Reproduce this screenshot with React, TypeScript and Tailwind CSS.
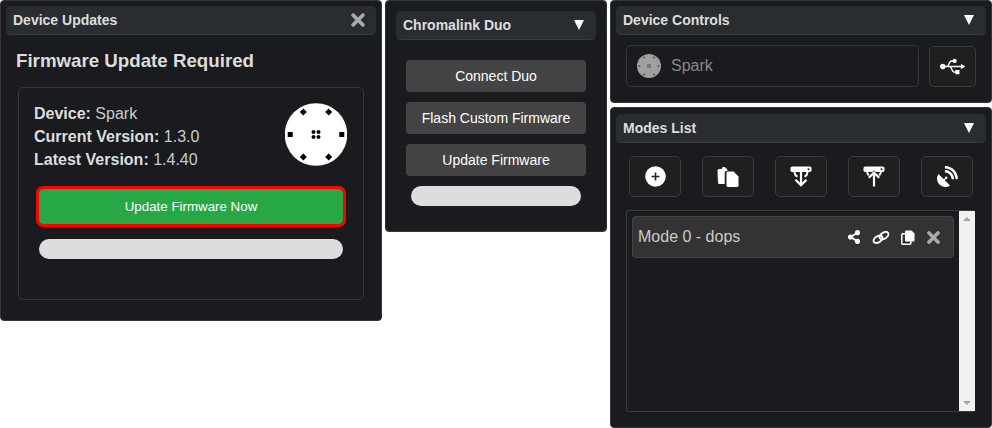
import React from "react";
import { FaTimes, FaUsb, FaShareAlt, FaSatelliteDish } from "react-icons/fa";

function Header({ title, close }: { title: string; close?: boolean }) {
  return (
    <div className="flex h-[29px] items-center justify-between rounded-[5px] border-b border-[#3a3d40] bg-[#2a2d30] pl-[7px] pr-[11px]">
      <span className="text-[14px] font-bold text-[#dddddd]">{title}</span>
      {close ? (
        <FaTimes className="mr-[-3px] text-[#aaaaaa]" size={20} />
      ) : (
        <span className="mr-[1px] h-0 w-0 border-x-[5.5px] border-t-[10px] border-x-transparent border-t-white" />
      )}
    </div>
  );
}

function GrayButton({ children }: { children: React.ReactNode }) {
  return (
    <div className="flex h-[32px] w-[180px] items-center justify-center rounded-[4px] bg-[#444444] text-[14px] text-white">
      {children}
    </div>
  );
}

function ToolButton({ children }: { children: React.ReactNode }) {
  return (
    <div className="flex h-[41px] w-[52px] items-center justify-center rounded-[5px] border border-[#3c3c3c] bg-[#1f1f1f] text-white">
      {children}
    </div>
  );
}

function DeviceImage() {
  const diamonds = [
    [-12.7, -22.5],
    [12.7, -22.5],
    [-12.7, 22.5],
    [12.7, 22.5],
  ];
  return (
    <svg width="62" height="63" viewBox="-31 -31.5 62 63" className="mt-[1px]">
      <circle r="31.3" fill="#fff" />
      {diamonds.map(([x, y], i) => (
        <rect key={i} x={x - 2.5} y={y - 2.5} width="5" height="5" fill="#000" transform={`rotate(45 ${x} ${y})`} />
      ))}
      <rect x="-28.3" y="-2.5" width="5" height="5" fill="#000" />
      <rect x="23.3" y="-2.5" width="5" height="5" fill="#000" />
      {[-2.5, 2.5].map((x) =>
        [-2.5, 2.5].map((y) => <rect key={`${x}${y}`} x={x - 1.8} y={y - 1.8} width="3.6" height="3.6" rx="1" fill="#000" />)
      )}
    </svg>
  );
}

function MiniDevice() {
  return (
    <svg width="24" height="24" viewBox="-12 -12 24 24">
      <circle r="12" fill="#a0a0a0" />
      <rect x="-2" y="-2" width="4" height="4" fill="#777" />
      {[[-5, -8.5], [5, -8.5], [-9.5, 0], [9.5, 0], [-5, 8.5], [5, 8.5]].map(([x, y], i) => (
        <circle key={i} cx={x} cy={y} r="1" fill="#555" />
      ))}
    </svg>
  );
}

function PlusIcon() {
  return (
    <svg width="21" height="21" viewBox="0 0 21 21">
      <circle cx="10.5" cy="10.5" r="10.3" fill="#fff" />
      <path d="M10.5 6.5v8M6.5 10.5h8" stroke="#3a1a24" strokeWidth="1.6" />
    </svg>
  );
}

function PasteIcon() {
  return (
    <svg width="22" height="22" viewBox="0 0 22 22" fill="#fff">
      <path d="M0.5 4.5a1.5 1.5 0 0 1 1.5-1.5h2.5a2.5 2.5 0 0 1 4.8-.5l1.2 1.5v1h-1a1.8 1.8 0 0 0-1.8 1.8v11.2h-5.2a1.5 1.5 0 0 1-1.5-1.5z" />
      <path d="M9.5 7a1.5 1.5 0 0 1 1.5-1.5h5.5l5 5v9a1.5 1.5 0 0 1-1.5 1.5h-9a1.5 1.5 0 0 1-1.5-1.5z" />
    </svg>
  );
}

function TrayDown() {
  return (
    <svg width="22" height="21" viewBox="0 0 22 21">
      <path d="M4.5 5c0 3.2.8 4.8 3 5.6M17.5 5c0 3.2-.8 4.8-3 5.6" fill="none" stroke="#fff" strokeWidth="2" />
      <rect x="0.5" y="0.5" width="21" height="5.4" rx="1.6" fill="#fff" />
      <circle cx="18.5" cy="3.2" r="1" fill="#1f1f1f" />
      <path d="M11 7v12" fill="none" stroke="#1f1f1f" strokeWidth="4.4" />
      <path d="M11 5v14M5.5 13.8L11 19.3l5.5-5.5" fill="none" stroke="#fff" strokeWidth="2.2" />
    </svg>
  );
}

function TrayUp() {
  return (
    <svg width="22" height="21" viewBox="0 0 22 21">
      <path d="M4 5c0 2.400.6 3.600 2 4.600M18 5c0 2.400-.6 3.600-2 4.600" fill="none" stroke="#fff" strokeWidth="2" />
      <rect x="0.5" y="0.5" width="21" height="5.4" rx="1.6" fill="#fff" />
      <circle cx="18.5" cy="3.2" r="1" fill="#1f1f1f" />
      <path d="M4.500 13.400L11 7l6.500 6.400" fill="none" stroke="#1f1f1f" strokeWidth="4" />
      <path d="M11 20.500V6M5.800 11.800L11 6.500l5.200 5.300" fill="none" stroke="#fff" strokeWidth="2.200" />
    </svg>
  );
}

function LinkIcon() {
  return (
    <svg width="18" height="15" viewBox="0 0 18 15" fill="none" stroke="#fff" strokeWidth="1.9">
      <ellipse cx="6" cy="9.3" rx="4.9" ry="3" transform="rotate(-32 6 9.3)" />
      <ellipse cx="12" cy="5.7" rx="4.9" ry="3" transform="rotate(-32 12 5.7)" />
    </svg>
  );
}

function CopyIcon() {
  return (
    <svg width="14" height="15" viewBox="0 0 14 15">
      <rect x="0.8" y="3.8" width="9" height="10.4" rx="1" fill="#333" stroke="#fff" strokeWidth="1.5" />
      <path d="M5 0.5h5.5l3 3v7a1 1 0 0 1-1 1h-7.5a1 1 0 0 1-1-1v-9a1 1 0 0 1 1-1z" fill="#fff" />
    </svg>
  );
}

const panel = "rounded-[4px] border border-[#34373a] bg-[#1a1b1e] box-border";

export default function App() {
  return (
    <div className="flex h-[428px] w-[992px] items-start gap-[3px] overflow-hidden bg-white font-['Liberation_Sans',Arial,sans-serif]">
      <section className={`${panel} h-[321px] w-[382px] p-[5px]`}>
        <Header title="Device Updates" close />
        <div className="px-[10px]">
          <h2 className="mt-[15px] text-[18.72px] font-bold leading-[22px] text-[#dddddd]">Firmware Update Required</h2>
          <div className="mt-[15px] ml-[2px] flex h-[213px] w-[346px] flex-col items-center rounded-[5px] border border-[#36393c] pt-[14px]">
            <div className="flex h-[70px] w-full justify-between pl-[15px] pr-[16px]">
              <div className="text-[16px] leading-[23px] text-[#cccccc]">
                <div><b className="text-[#dddddd]">Device:</b> Spark</div>
                <div><b className="text-[#dddddd]">Current Version:</b> 1.3.0</div>
                <div><b className="text-[#dddddd]">Latest Version:</b> 1.4.40</div>
              </div>
              <DeviceImage />
            </div>
            <div className="mt-[17px] flex h-[35px] w-[304px] items-center justify-center rounded-[4px] bg-[#28a745] text-[13.33px] text-white outline-[3px] outline-[#ff0000]">
              Update Firmware Now
            </div>
            <div className="mt-[15px] h-[20px] w-[304px] rounded-[10px] bg-[#dddddd]" />
          </div>
        </div>
      </section>

      <section className={`${panel} h-[232px] w-[222px] px-[10px] pt-[10px]`}>
        <Header title="Chromalink Duo" />
        <div className="mt-[20px] flex flex-col items-center gap-[10px]">
          <GrayButton>Connect Duo</GrayButton>
          <GrayButton>Flash Custom Firmware</GrayButton>
          <GrayButton>Update Firmware</GrayButton>
          <div className="h-[20px] w-[170px] rounded-[10px] bg-[#dddddd]" />
        </div>
      </section>

      <div className="flex w-[382px] flex-col gap-[4px]">
        <section className={`${panel} h-[103px] p-[5px]`}>
          <Header title="Device Controls" />
          <div className="mt-[10px] flex items-end gap-[10px] pl-[10px]">
            <div className="flex h-[42px] w-[293px] items-center gap-[10px] rounded-[5px] border border-[#33363a] pl-[10px] text-[16px] text-[#888888]">
              <MiniDevice />
              Spark
            </div>
            <div className="flex h-[41px] w-[47px] items-center justify-center rounded-[5px] border border-[#3c3c3c] bg-[#1f1f1f] text-white">
              <FaUsb size={25} />
            </div>
          </div>
        </section>

        <section className={`${panel} h-[321px] px-[5px] pt-[6px]`}>
          <Header title="Modes List" />
          <div className="mt-[13px] flex gap-[21px] pl-[13px]">
            <ToolButton><PlusIcon /></ToolButton>
            <ToolButton><PasteIcon /></ToolButton>
            <ToolButton><TrayDown /></ToolButton>
            <ToolButton><TrayUp /></ToolButton>
            <ToolButton><FaSatelliteDish size={21} /></ToolButton>
          </div>
          <div className="mt-[13px] ml-[10px] flex h-[202px] w-[349px] rounded-[3px] border border-r-0 border-[#3a3d40]">
            <div className="flex-1 p-[5px]">
              <div className="flex h-[42px] w-[322px] items-center justify-between rounded-[4px] border border-[#444444] bg-[#333333] pl-[5px] pr-[10px] text-[16px] text-[#cccccc]">
                <span>Mode 0 - dops</span>
                <div className="flex items-center text-white">
                  <FaShareAlt size={14} />
                  <span className="ml-[11px]"><LinkIcon /></span>
                  <span className="ml-[11px]"><CopyIcon /></span>
                  <FaTimes size={19} className="ml-[9px] text-[#aaaaaa]" />
                </div>
              </div>
            </div>
            <div className="flex w-[17px] flex-col items-center justify-between bg-[#f1f1f1] py-[6px]">
              <span className="h-0 w-0 border-x-[4px] border-b-[4px] border-x-transparent border-b-[#a3a3a3]" />
              <span className="h-0 w-0 border-x-[4px] border-t-[4px] border-x-transparent border-t-[#a3a3a3]" />
            </div>
          </div>
        </section>
      </div>
    </div>
  );
}
